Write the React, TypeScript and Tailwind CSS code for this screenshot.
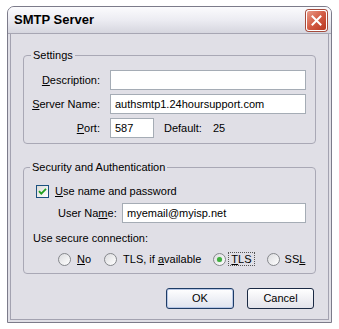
function Radio({ checked }: { checked?: boolean }) {
  return (
    <span className="w-[13px] h-[13px] rounded-full border border-[#85878c] bg-gradient-to-br from-[#dcdcdf] to-white flex items-center justify-center shrink-0">
      {checked && <span className="w-[5px] h-[5px] rounded-full bg-[#3fae3f] shadow-[0_0_1px_#8fd88f]" />}
    </span>
  );
}

function Field({ w, value }: { w: string; value?: string }) {
  return (
    <div className={`${w} h-[20px] shrink-0 border border-[#a5acb5] bg-white pl-[4px] flex items-center whitespace-nowrap`}>
      {value}
    </div>
  );
}

export default function App() {
  return (
    <div
      className="w-[339px] h-[329px] bg-white pt-[6px] pl-[7px] text-[11px] leading-[13px] text-black whitespace-nowrap"
      style={{ fontFamily: '"Liberation Sans", Arial, sans-serif' }}
    >
      <div className="w-[325px] h-[317px] rounded-t-[7px] border border-[#7c7b8a] bg-[#e0dfe6] flex flex-col overflow-hidden">
        <div className="h-[27px] shrink-0 bg-gradient-to-b from-[#fbfbfd] via-[#ececf2] to-[#d6d6df] border-b border-[#a7a6b3] flex items-center justify-between pl-[6px] pr-[4px]">
          <span className="font-bold text-[13px] leading-[16px]">SMTP Server</span>
          <div className="w-[21px] h-[21px] rounded-[3px] border border-white bg-gradient-to-br from-[#e89a88] via-[#d25a43] to-[#b8361f] flex items-center justify-center shadow-[0_0_0_1px_#a54b3c]">
            <svg width="11" height="11" viewBox="0 0 11 11">
              <path d="M1.5 1.5 L9.5 9.5 M9.5 1.5 L1.5 9.5" stroke="white" strokeWidth="2" strokeLinecap="square" />
            </svg>
          </div>
        </div>
        <div className="flex-1 px-[2px] pb-[2px]">
          <div className="h-full border-x border-b border-[#a3a2b0] pt-[15px] px-[12px]">
            <fieldset className="border border-[#a9a8b5] rounded-[4px] pb-[5px] pl-[1px]">
              <legend className="ml-[6px] px-[2px]">Settings</legend>
              <div className="mt-[8px] grid grid-cols-[75px_auto] gap-x-[10px] gap-y-[4px] items-center">
                <span className="text-right">
                  <u>D</u>escription:
                </span>
                <Field w="w-[196px]" />
                <span className="text-right">
                  <u>S</u>erver Name:
                </span>
                <Field w="w-[196px]" value="authsmtp1.24hoursupport.com" />
                <span className="text-right">
                  <u>P</u>ort:
                </span>
                <div className="flex items-center">
                  <Field w="w-[44px]" value="587" />
                  <span className="ml-[10px]">Default:</span>
                  <span className="ml-[11px]">25</span>
                </div>
              </div>
            </fieldset>

            <fieldset className="mt-[17px] border border-[#a9a8b5] rounded-[4px] pl-[9px] pb-[7px]">
              <legend className="ml-[-3px] px-[2px]">Security and Authentication</legend>
              <div className="mt-[11px] ml-[3px] flex items-center gap-[6px]">
                <span className="w-[13px] h-[13px] border border-[#1c5180] bg-gradient-to-br from-[#dcdcd7] to-white flex items-center justify-center">
                  <svg width="9" height="9" viewBox="0 0 9 9">
                    <path d="M1 4.2 L3.3 6.6 L8 1.8" fill="none" stroke="#21a121" strokeWidth="1.8" />
                  </svg>
                </span>
                <span>
                  <u>U</u>se name and password
                </span>
              </div>
              <div className="mt-[5px] ml-[25px] flex items-center">
                <span className="w-[64px]">
                  User Na<u>m</u>e:
                </span>
                <Field w="w-[184px]" value="myemail@myisp.net" />
              </div>
              <div className="mt-[9px]">Use secure connection:</div>
              <div className="mt-[7px] ml-[25px] flex items-center">
                <div className="flex items-center gap-[6px]">
                  <Radio />
                  <span>
                    <u>N</u>o
                  </span>
                </div>
                <div className="ml-[13px] flex items-center gap-[6px]">
                  <Radio />
                  <span>
                    TLS, if <u>a</u>vailable
                  </span>
                </div>
                <div className="ml-[12px] flex items-center gap-[2px]">
                  <Radio checked />
                  <span className="border border-dotted border-[#555] px-[2px] leading-[12px]">
                    <u>T</u>LS
                  </span>
                </div>
                <div className="ml-[12px] flex items-center gap-[5px]">
                  <Radio />
                  <span>
                    SS<u>L</u>
                  </span>
                </div>
              </div>
            </fieldset>

            <div className="mt-[14px] pr-[2px] flex justify-end gap-[13px]">
              <button className="w-[68px] h-[21px] rounded-[3px] border border-[#1e3c66] bg-gradient-to-b from-white to-[#dfe3ee] shadow-[inset_0_0_0_1px_#b7c7e6]">
                OK
              </button>
              <button className="w-[67px] h-[21px] rounded-[3px] border border-[#1b2a44] bg-gradient-to-b from-white to-[#e2e2ea]">
                Cancel
              </button>
            </div>
          </div>
        </div>
      </div>
    </div>
  );
}
